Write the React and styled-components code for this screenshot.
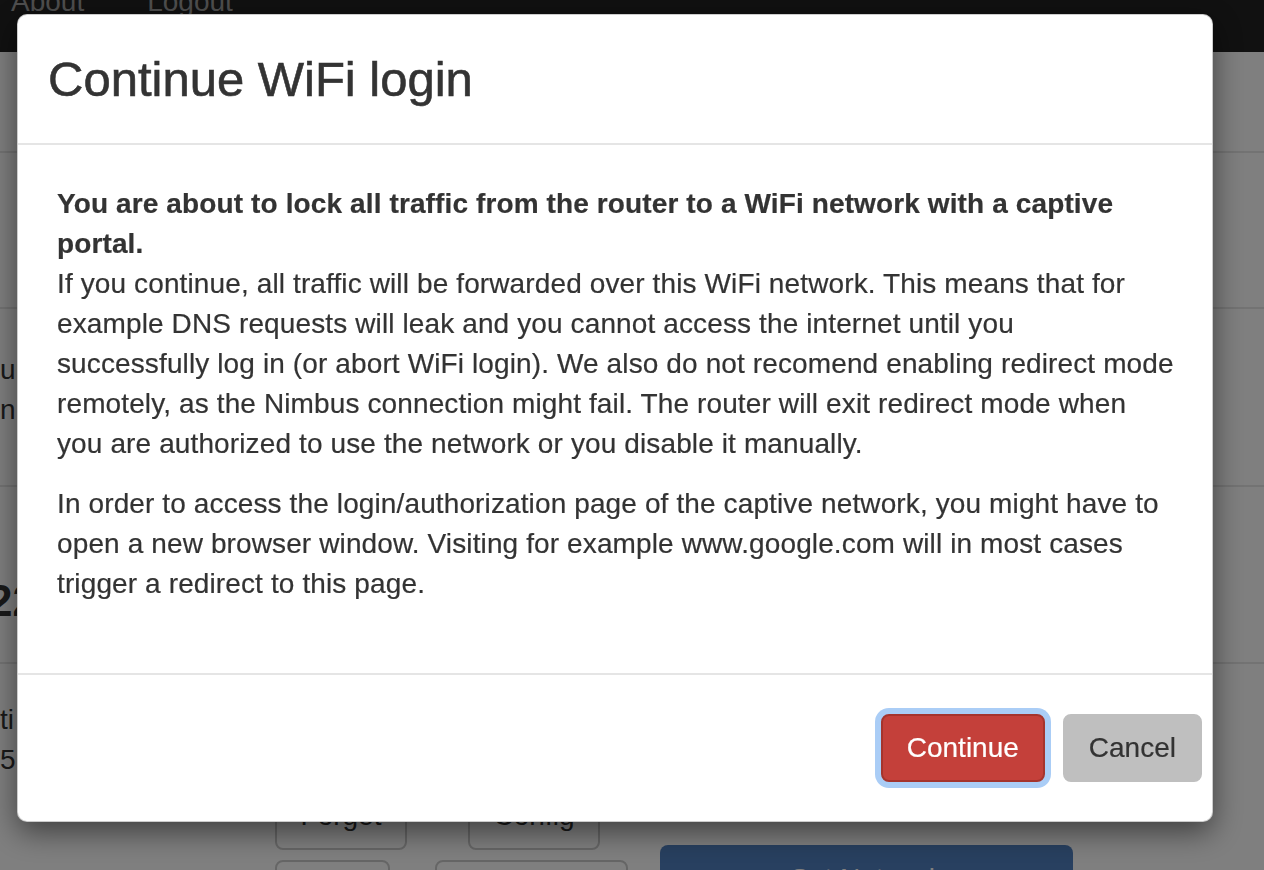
import React from "react";
import styled, { createGlobalStyle } from "styled-components";

const Global = createGlobalStyle`
  html, body { margin: 0; padding: 0; }
  body {
    font-family: "Liberation Sans", Arial, Helvetica, sans-serif;
    color: #333;
    background: #fff;
    overflow: hidden;
    height: 870px;
  }
`;

/* ---------- background page ---------- */
const Page = styled.div`
  width: 1264px;
  height: 870px;
  overflow: hidden;
  font-family: "Liberation Sans", Arial, Helvetica, sans-serif;
  font-size: 28px;
  line-height: 40px;
`;

const Navbar = styled.nav`
  height: 100px;
  margin-top: -48px;
  background: #222;
  display: flex;
  align-items: flex-start;
  padding: 30px 0 0 11px;
  box-sizing: border-box;
  gap: 63px;
`;

const NavLink = styled.a`
  color: #9d9d9d;
  text-decoration: none;
`;

const Section = styled.section`
  height: ${(p) => p.$h}px;
  box-sizing: border-box;
  border-top: ${(p) => (p.$line ? "2px solid #e6e6e6" : "none")};
  padding-top: ${(p) => p.$pt || 0}px;
  color: #333;
  white-space: nowrap;
`;

const BigNumber = styled.div`
  font-family: "Liberation Sans", Arial, sans-serif;
  font-size: 44px;
  font-weight: 700;
  line-height: 60px;
  margin-left: -12px;
`;

const ActionArea = styled.div`
  display: flex;
  align-items: flex-start;
  gap: 32px;
  padding-left: 275px;
`;

const ButtonGrid = styled.div`
  width: 353px;
  display: grid;
  grid-template-columns: 160px 193px;
  row-gap: 10px;
  justify-items: start;
`;

const BgButton = styled.button`
  font: inherit;
  font-size: 28px;
  height: 68px;
  box-sizing: border-box;
  background: #fff;
  border: 2px solid #ccc;
  border-radius: 8px;
  color: #333;
  width: ${(p) => p.$w || 132}px;
  margin-left: ${(p) => p.$ml || 0}px;
`;

const BlueButton = styled.button`
  width: 413px;
  margin-top: 63px;
  font: inherit;
  font-size: 28px;
  height: 68px;
  border: none;
  border-radius: 8px;
  background: #5080c0;
  color: #fff;
`;

/* ---------- overlay & modal ---------- */
const Backdrop = styled.div`
  position: fixed;
  inset: 0;
  background: rgba(0, 0, 0, 0.5);
`;

const Dialog = styled.div`
  position: fixed;
  top: 14px;
  left: 17px;
  width: 1196px;
  box-sizing: border-box;
  background: #fff;
  border: 1px solid rgba(0, 0, 0, 0.2);
  border-radius: 10px;
  box-shadow: 0 10px 30px rgba(0, 0, 0, 0.5);
  color: #333;
  font-family: "Liberation Sans", Arial, Helvetica, sans-serif;
`;

const Header = styled.div`
  padding: 30px;
  border-bottom: 2px solid #e5e5e5;
`;

const Title = styled.h4`
  margin: 0;
  font-size: 49px;
  line-height: 68px;
  font-weight: 400;
  -webkit-text-stroke: 0.6px #333;
`;

const Body = styled.div`
  padding: 39px 30px 49px 39px;
  font-size: 28px;
  line-height: 40px;
  letter-spacing: 0.12px;
  -webkit-text-stroke: 0.2px #333;
`;

const Para = styled.p`
  margin: 0 0 20px;
`;

const Footer = styled.div`
  border-top: 2px solid #e5e5e5;
  padding: 39px 10px 39px;
  display: flex;
  justify-content: flex-end;
  gap: 18px;
`;

const Btn = styled.button`
  font-family: inherit;
  font-size: 28px;
  line-height: 40px;
  padding: 12px 24px;
  border-radius: 8px;
  border: 2px solid ${(p) => (p.$primary ? "#a5342d" : "#bfbfbf")};
  background: ${(p) => (p.$primary ? "#c4403a" : "#bfbfbf")};
  color: ${(p) => (p.$primary ? "#fff" : "#333")};
  box-shadow: ${(p) => (p.$focus ? "0 0 0 6px #aacdf6" : "none")};
  -webkit-text-stroke: 0.2px currentColor;
  cursor: pointer;
`;

export default function App() {
  return (
    <>
      <Global />
      <Page>
        <Navbar>
          <NavLink>About</NavLink>
          <NavLink>Logout</NavLink>
        </Navbar>
        <Section $h={99} />
        <Section $h={156} $line />
        <Section $h={178} $line $pt={41}>
          <div>ur</div>
          <div>n</div>
        </Section>
        <Section $h={177} $line $pt={84}>
          <BigNumber>22</BigNumber>
        </Section>
        <Section $h={120} $line $pt={36}>
          <div>ti</div>
          <div>5</div>
        </Section>
        <ActionArea>
          <ButtonGrid>
            <BgButton>Forget</BgButton>
            <BgButton $w={132} $ml={33}>Config</BgButton>
            <BgButton $w={115}>Scan</BgButton>
            <BgButton $w={193}>Disconnect</BgButton>
          </ButtonGrid>
          <BlueButton>Set Network</BlueButton>
        </ActionArea>
      </Page>
      <Backdrop />
      <Dialog role="dialog">
        <Header>
          <Title>Continue WiFi login</Title>
        </Header>
        <Body>
          <Para>
            <strong>
              You are about to lock all traffic from the router to a WiFi network with a captive portal.
            </strong>
            <br />
            If you continue, all traffic will be forwarded over this WiFi network. This means that for
            example DNS requests will leak and you cannot access the internet until you
            <br />
            successfully log in (or abort WiFi login). We also do not recomend enabling redirect mode
            remotely, as the Nimbus connection might fail. The router will exit redirect mode when
            <br />
            you are authorized to use the network or you disable it manually.
          </Para>
          <Para>
            In order to access the login/authorization page of the captive network, you might have to
            open a new browser window. Visiting for example www.google.com will in most cases trigger a
            redirect to this page.
          </Para>
        </Body>
        <Footer>
          <Btn $primary $focus>Continue</Btn>
          <Btn>Cancel</Btn>
        </Footer>
      </Dialog>
    </>
  );
}
